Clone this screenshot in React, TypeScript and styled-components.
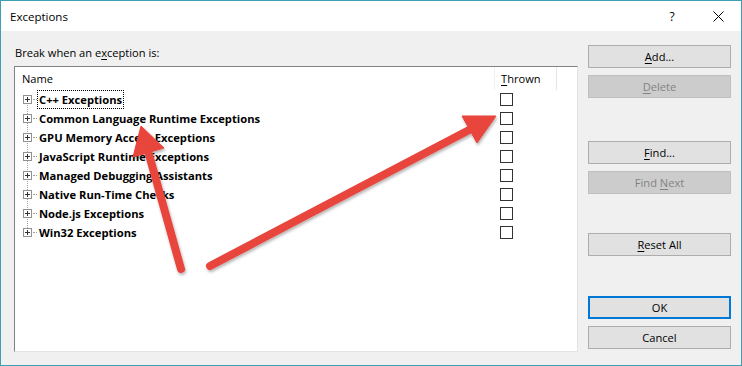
import React from 'react';
import styled, { createGlobalStyle } from 'styled-components';

const GlobalStyle = createGlobalStyle`
  html, body {
    margin: 0;
    padding: 0;
    background: #ffffff;
  }
  body {
    font-family: "Open Sans", "Noto Sans", "Liberation Sans", sans-serif;
    font-size: 11.1px;
    color: #000;
  }
`;

const Window = styled.div`
  position: relative;
  width: 742px;
  height: 366px;
  box-sizing: border-box;
  border: 1px solid #3f9fb4;
  background: #f0f0f0;
  display: flex;
  flex-direction: column;
  overflow: hidden;
`;

const TitleBar = styled.div`
  height: 30px;
  background: #ffffff;
  display: flex;
  align-items: center;
  padding-left: 9px;
  font-size: 11.5px;
`;

const TitleText = styled.div`
  flex: 1;
`;

const TitleButton = styled.div`
  width: 46px;
  height: 30px;
  display: flex;
  align-items: center;
  justify-content: center;
  font-size: 12px;
`;

const Body = styled.div`
  flex: 1;
  display: flex;
  padding: 14px 10px 13px 13px;
  gap: 10px;
`;

const LeftColumn = styled.div`
  flex: 1;
  display: flex;
  flex-direction: column;
`;

const Label = styled.div`
  height: 21px;
  padding-left: 1px;
  line-height: 16px;
`;

const ListBox = styled.div`
  flex: 1;
  background: #ffffff;
  border-top: 1px solid #828282;
  border-left: 1px solid #828282;
  border-right: 1px solid #e3e3e3;
  border-bottom: 1px solid #e3e3e3;
  position: relative;
`;

const HeaderRow = styled.div`
  display: grid;
  grid-template-columns: 479px 63px 1fr;
  height: 23px;
`;

const HeaderCell = styled.div<{ $sep?: boolean }>`
  display: flex;
  align-items: center;
  padding-left: ${(p) => (p.$sep ? '6px' : '7px')};
  border-left: ${(p) => (p.$sep ? '1px solid #f0f0f0' : 'none')};
  border-right: ${(p) => (p.$sep ? '1px solid #e5e5e5' : 'none')};
`;

const Rows = styled.div`
  position: relative;
`;

const TreeLine = styled.div`
  position: absolute;
  left: 12px;
  top: 9px;
  height: 133px;
  border-left: 1px dotted #a0a0a0;
`;

const Row = styled.div`
  display: grid;
  grid-template-columns: 479px 63px 1fr;
  height: 19px;
`;

const NameCell = styled.div`
  display: flex;
  align-items: center;
  padding-left: 8px;
`;

const Expander = styled.div`
  position: relative;
  width: 7px;
  height: 7px;
  border: 1px solid #919191;
  background: #ffffff;
  z-index: 1;
  &::before {
    content: '';
    position: absolute;
    left: 1px;
    top: 3px;
    width: 5px;
    height: 1px;
    background: #333;
  }
  &::after {
    content: '';
    position: absolute;
    left: 3px;
    top: 1px;
    width: 1px;
    height: 5px;
    background: #333;
  }
`;

const Connector = styled.div`
  width: 4px;
  margin-left: 1px;
  border-top: 1px dotted #a0a0a0;
`;

const NameText = styled.div<{ $focused?: boolean }>`
  font-weight: 700;
  font-size: 11.2px;
  padding: 0 1px;
  line-height: 17px;
  border: 1px dotted ${(p) => (p.$focused ? '#000' : 'transparent')};
`;

const CheckCell = styled.div`
  display: flex;
  align-items: center;
  padding-left: 6px;
`;

const CheckBox = styled.div`
  width: 11px;
  height: 11px;
  border: 1px solid #333;
  background: #fff;
`;

const RightColumn = styled.div`
  width: 143px;
  display: flex;
  flex-direction: column;
`;

const Button = styled.div<{ $top: number; $disabled?: boolean; $default?: boolean }>`
  margin-top: ${(p) => p.$top}px;
  height: 23px;
  box-sizing: border-box;
  display: flex;
  align-items: center;
  justify-content: center;
  background: ${(p) => (p.$disabled ? '#cccccc' : '#e1e1e1')};
  color: ${(p) => (p.$disabled ? '#838383' : '#000')};
  border: ${(p) =>
    p.$default ? '2px solid #0078d7' : p.$disabled ? '1px solid #bfbfbf' : '1px solid #adadad'};
`;

const U = styled.span`
  text-decoration: underline;
  text-underline-offset: 2px;
`;

const Overlay = styled.svg`
  position: absolute;
  left: 0;
  top: 0;
  pointer-events: none;
`;

const exceptions = [
  'C++ Exceptions',
  'Common Language Runtime Exceptions',
  'GPU Memory Access Exceptions',
  'JavaScript Runtime Exceptions',
  'Managed Debugging Assistants',
  'Native Run-Time Checks',
  'Node.js Exceptions',
  'Win32 Exceptions',
];

function Arrows() {
  const red = '#e8453c';
  return (
    <Overlay width={742} height={366} viewBox="0 0 742 366">
      <defs>
        <filter id="shadow" x="-20%" y="-20%" width="140%" height="140%">
          <feDropShadow dx="1" dy="2" stdDeviation="1.5" floodColor="#000" floodOpacity="0.3" />
        </filter>
      </defs>
      <g filter="url(#shadow)" fill={red} stroke={red}>
        <line x1={180} y1={268} x2={147} y2={150} strokeWidth={8} strokeLinecap="round" />
        <polygon points="140,125 163,147 132,156" strokeWidth={1} strokeLinejoin="round" />
        <line x1={209} y1={265} x2={470} y2={128} strokeWidth={8} strokeLinecap="round" />
        <polygon points="495,115 476,142 461,115" strokeWidth={1} strokeLinejoin="round" />
      </g>
    </Overlay>
  );
}

export default function App() {
  return (
    <>
      <GlobalStyle />
      <Window>
        <TitleBar>
          <TitleText>Exceptions</TitleText>
          <TitleButton>?</TitleButton>
          <TitleButton>
            <svg width="11" height="11" viewBox="0 0 11 11">
              <path d="M0.5 0.5 L10.5 10.5 M10.5 0.5 L0.5 10.5" stroke="#000" strokeWidth="1" />
            </svg>
          </TitleButton>
        </TitleBar>
        <Body>
          <LeftColumn>
            <Label>
              Break when an e<U>x</U>ception is:
            </Label>
            <ListBox>
              <HeaderRow>
                <HeaderCell>Name</HeaderCell>
                <HeaderCell $sep>
                  <U>T</U>hrown
                </HeaderCell>
                <div />
              </HeaderRow>
              <Rows>
                <TreeLine />
                {exceptions.map((name, i) => (
                  <Row key={name}>
                    <NameCell>
                      <Expander />
                      <Connector />
                      <NameText $focused={i === 0}>{name}</NameText>
                    </NameCell>
                    <CheckCell>
                      <CheckBox />
                    </CheckCell>
                    <div />
                  </Row>
                ))}
              </Rows>
            </ListBox>
          </LeftColumn>
          <RightColumn>
            <Button $top={0}>
              <span>
                <U>A</U>dd...
              </span>
            </Button>
            <Button $top={7} $disabled>
              <span>
                <U>D</U>elete
              </span>
            </Button>
            <Button $top={43}>
              <span>
                <U>F</U>ind...
              </span>
            </Button>
            <Button $top={7} $disabled>
              <span>
                Find <U>N</U>ext
              </span>
            </Button>
            <Button $top={39}>
              <span>
                <U>R</U>eset All
              </span>
            </Button>
            <Button $top={40} $default>
              OK
            </Button>
            <Button $top={7}>Cancel</Button>
          </RightColumn>
        </Body>
        <Arrows />
      </Window>
    </>
  );
}
